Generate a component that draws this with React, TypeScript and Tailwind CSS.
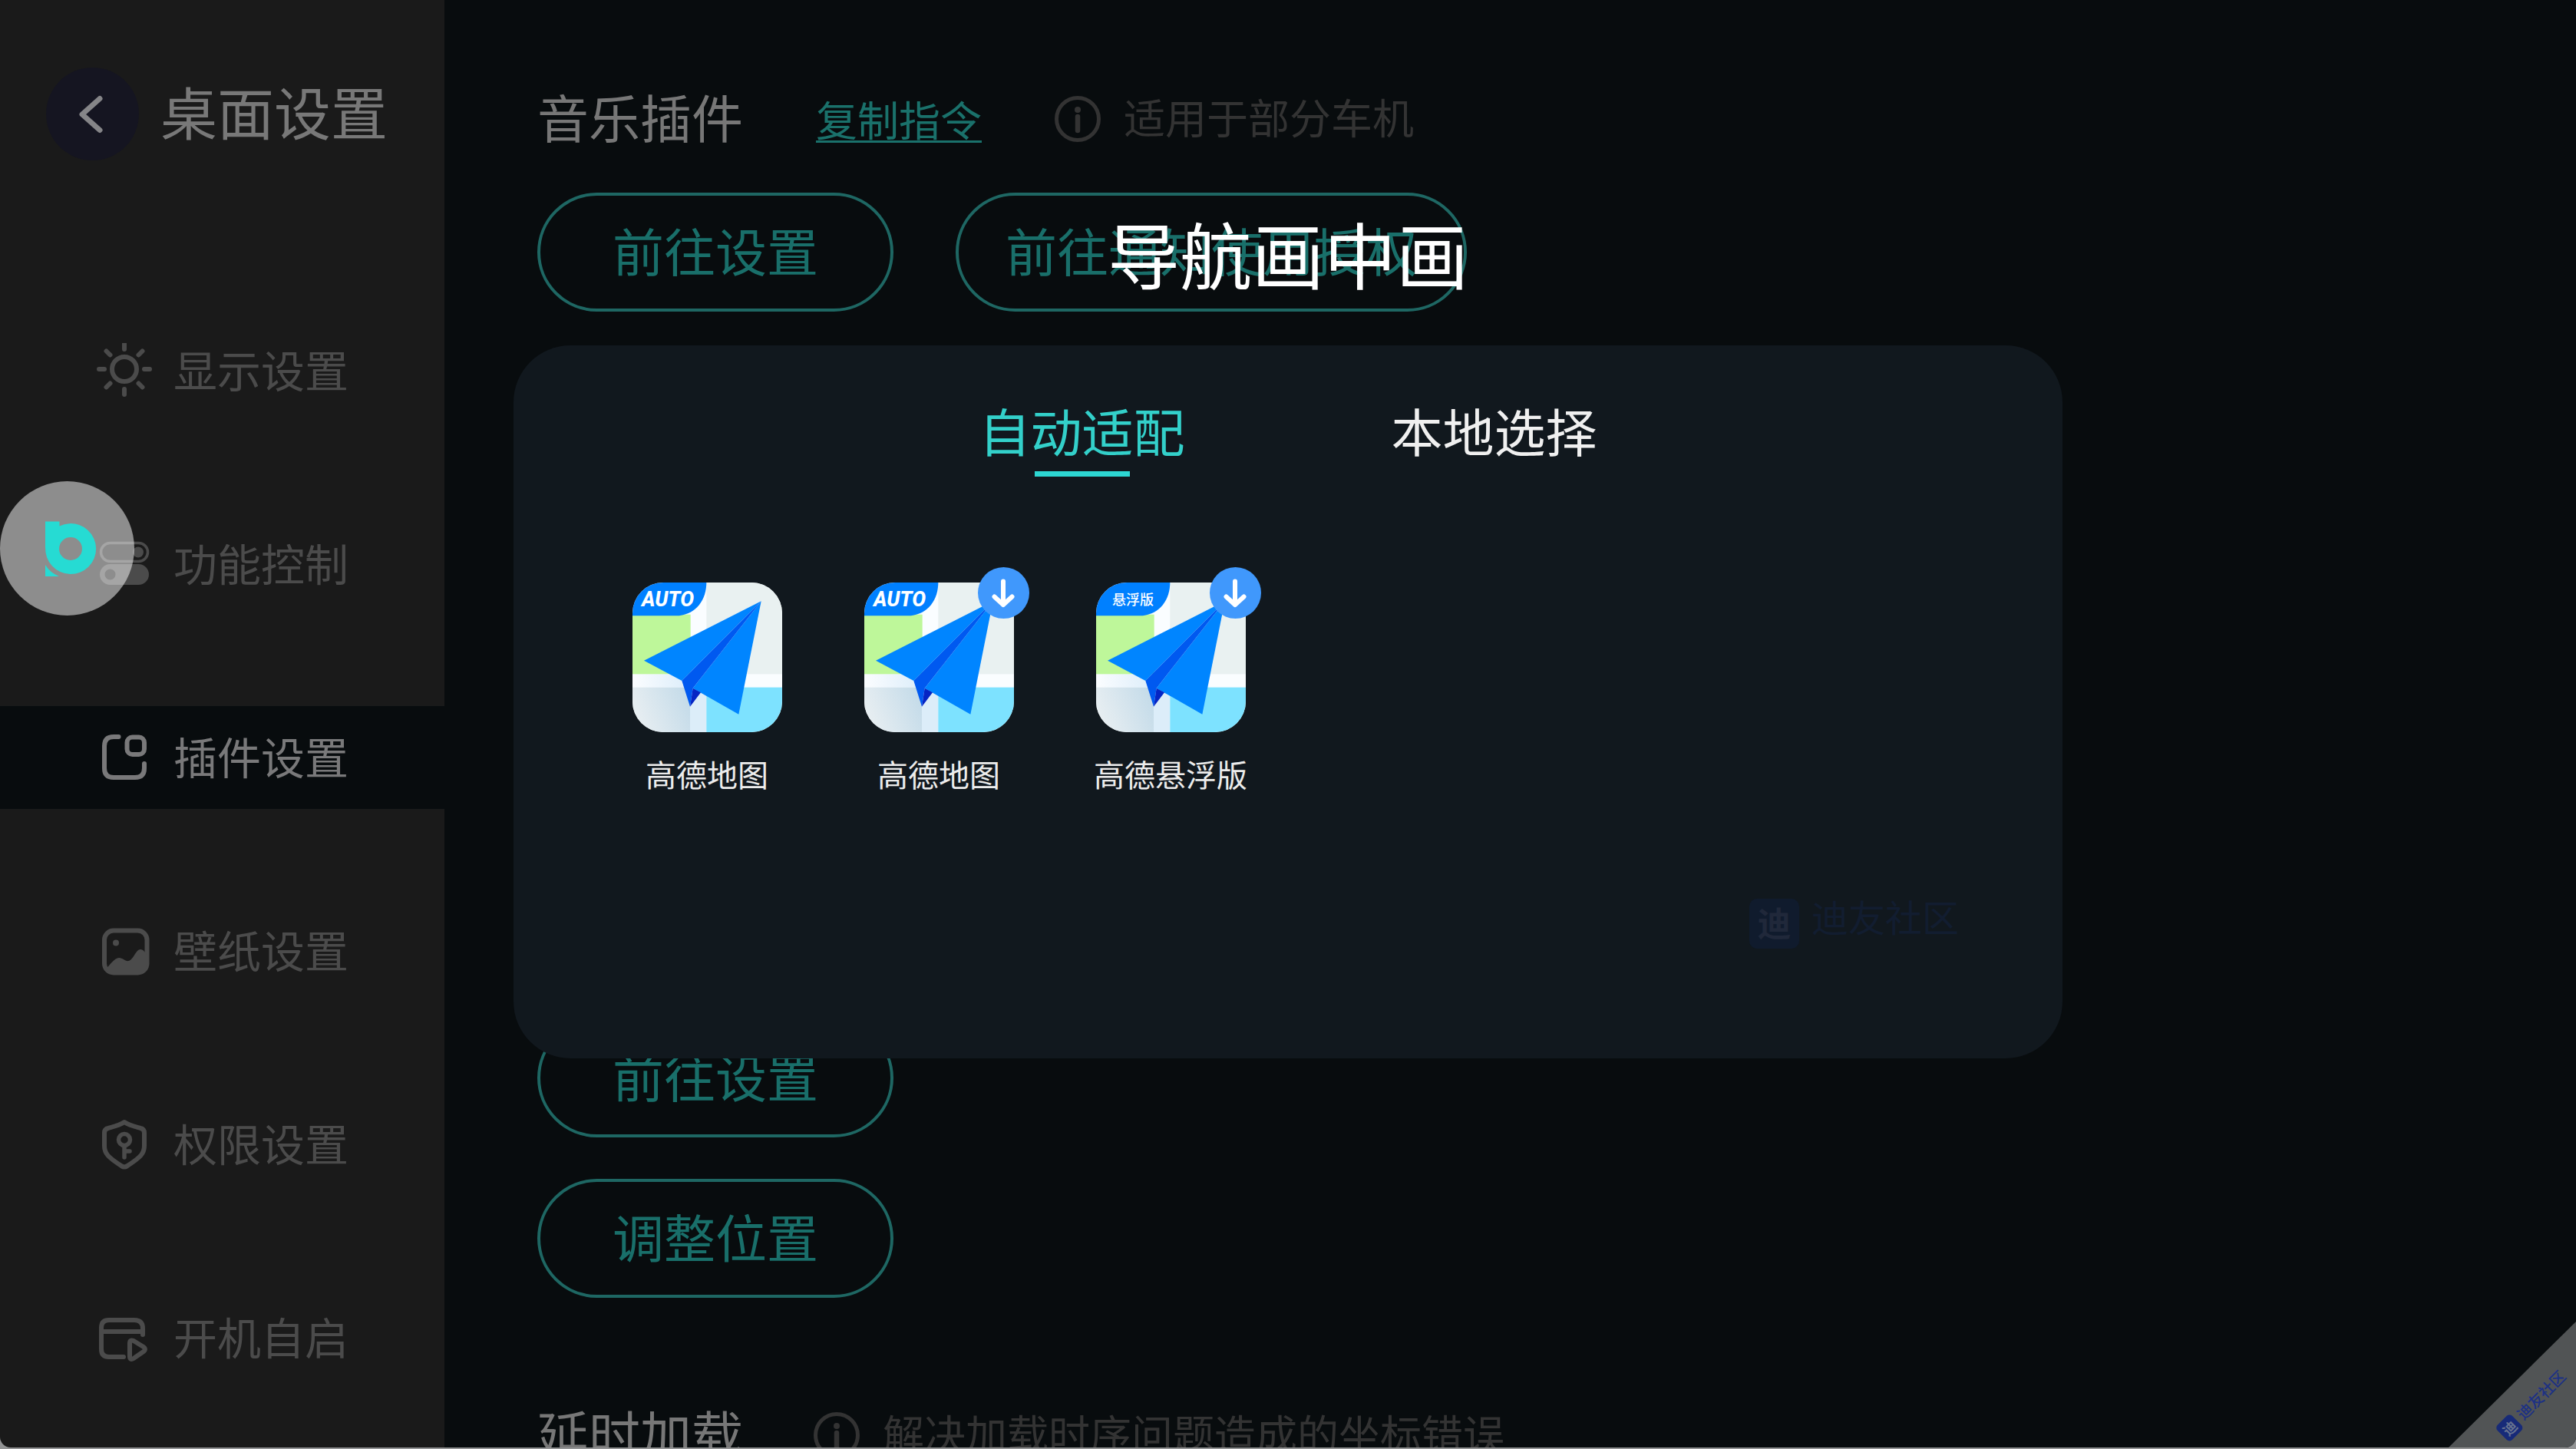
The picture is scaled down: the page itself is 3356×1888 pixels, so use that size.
import type { ReactNode } from "react";

const navItems = [
  { label: "显示设置", icon: <SunIcon /> },
  { label: "功能控制", icon: <ToggleIcon /> },
  { label: "插件设置", icon: <PluginIcon />, active: true },
  { label: "壁纸设置", icon: <WallpaperIcon /> },
  { label: "权限设置", icon: <ShieldKeyIcon /> },
  { label: "开机自启", icon: <BootIcon /> },
];

const apps = [
  { id: "auto", name: "高德地图", tag: "AUTO", download: false },
  { id: "auto-remote", name: "高德地图", tag: "AUTO", download: true },
  { id: "float", name: "高德悬浮版", tag: "悬浮版", download: true },
];

function NavSvg({ children }: { children: ReactNode }) {
  return (
    <svg
      viewBox="0 0 72 72"
      className="size-[72px] shrink-0"
      fill="none"
      stroke="currentColor"
      strokeWidth="6"
      strokeLinecap="round"
      strokeLinejoin="round"
      aria-hidden="true"
    >
      {children}
    </svg>
  );
}

function SunIcon() {
  return (
    <NavSvg>
      <circle cx="36" cy="34" r="16" />
      <path d="M36 1v7M36 60v7M3 34h7M62 34h7M12.500 10.500l5 5M54.500 52.500l5 5M12.500 57.500l5-5M54.500 15.500l5-5" />
    </NavSvg>
  );
}

function ToggleIcon() {
  return (
    <NavSvg>
      <rect x="5.500" y="8.500" width="61" height="24" rx="12" strokeWidth="3.500" />
      <circle cx="54" cy="20.500" r="7" fill="currentColor" stroke="none" />
      <path
        d="M17.500 36h37a13.500 13.500 0 0 1 0 27h-37a13.500 13.500 0 0 1 0-27ZM17.500 42.500a7 7 0 1 0 0 14a7 7 0 0 0 0-14Z"
        fill="currentColor"
        fillRule="evenodd"
        stroke="none"
      />
    </NavSvg>
  );
}

function PluginIcon() {
  return (
    <NavSvg>
      <path d="M28.500 9H22Q10 9 10 21V50Q10 62 22 62H50Q62 62 62 50V44" />
      <rect x="39.500" y="9.500" width="22.500" height="22.500" rx="7" />
    </NavSvg>
  );
}

function WallpaperIcon() {
  return (
    <NavSvg>
      <rect x="10" y="9.500" width="55.500" height="55" rx="12" />
      <circle cx="25" cy="25.500" r="4" fill="currentColor" stroke="none" />
      <path
        d="M11 60C18 54 23 45 29 45C34 45 37 50 42 49C48 47 51 34 57 34C61 34 63 38 65 41V54Q64 64 54 64H20Q13 64 11 60Z"
        fill="currentColor"
        stroke="none"
      />
    </NavSvg>
  );
}

function ShieldKeyIcon() {
  return (
    <NavSvg>
      <path d="M36 7C42 11 50 13 57 15Q62 16 62 21V38C62 48 57 53 40 64Q36 67 32 64C15 53 10 48 10 38V21Q10 16 15 15C22 13 30 11 36 7Z" />
      <circle cx="36" cy="30" r="7.500" strokeWidth="5.500" />
      <path d="M36 38v15M37 45h6" strokeWidth="5.500" />
    </NavSvg>
  );
}

function BootIcon() {
  return (
    <NavSvg>
      <path d="M60 32V24Q60 13 49 13H16Q6 13 6 23V51Q6 61 16 61H35M7 28H59" />
      <path d="M43 43Q43 38 48 40L61 48Q65 51 61 54L48 63Q43 66 43 60Z" />
    </NavSvg>
  );
}

function InfoIcon() {
  return (
    <svg viewBox="0 0 60 60" className="size-[60px] shrink-0" fill="none" stroke="currentColor" aria-hidden="true">
      <circle cx="30" cy="30" r="27.500" strokeWidth="5" />
      <circle cx="30" cy="18" r="4" fill="currentColor" stroke="none" />
      <path d="M30 27v18" strokeWidth="6.500" strokeLinecap="round" />
    </svg>
  );
}

function MapLogo({ id, tag }: { id: string; tag: string }) {
  return (
    <svg viewBox="0 0 585 585" className="size-[195px] rounded-[40px]" aria-hidden="true">
      <defs>
        <linearGradient id={`${id}-ground`} x1="0" y1="0.600" x2="1" y2="0.300">
          <stop offset="0" stopColor="#e9eff2" />
          <stop offset="1" stopColor="#c4dbe9" />
        </linearGradient>
        <linearGradient id={`${id}-road`} x1="0" y1="0" x2="1" y2="0">
          <stop offset="0" stopColor="#fbfdff" />
          <stop offset="0.350" stopColor="#deeefa" />
          <stop offset="0.500" stopColor="#fafdff" />
        </linearGradient>
      </defs>
      <rect width="585" height="585" fill="#fafdff" />
      <rect y="358" width="585" height="52" fill={`url(#${id}-road)`} />
      <rect x="225" y="410" width="64" height="175" fill="#dcedf9" />
      <rect y="125" width="227" height="233" fill="#bef79a" />
      <rect x="289" width="296" height="358" fill="#e9f1f1" />
      <rect y="410" width="225" height="175" fill={`url(#${id}-ground)`} />
      <rect x="289" y="410" width="296" height="175" fill="#7de2ff" />
      <path d="M503 73L45 305L193 384Z" fill="#0085ff" />
      <path d="M503 73L236 413L415 515Z" fill="#0085ff" />
      <path d="M503 73L193 384L225 485L236 413Z" fill="#0059f0" />
      <path d="M236 413L267 430L225 485Z" fill="#0525c4" />
      <path d="M0 0H289C289 75 240 130 170 130H0Z" fill="#0080ff" />
      {tag === "AUTO" ? (
        <text x="138" y="92" textAnchor="middle" className="fill-white font-[Roboto,sans-serif] text-[80px] font-extrabold italic">
          {tag}
        </text>
      ) : (
        <text x="144" y="87" textAnchor="middle" className="fill-white text-[54px] font-medium">
          {tag}
        </text>
      )}
    </svg>
  );
}

function OutlineButton({ children }: { children: ReactNode }) {
  return (
    <button
      type="button"
      className="h-[155px] min-w-[464px] rounded-full border-4 border-[#1e6763] px-[61px] pb-[8px] text-[67px] leading-none text-[#196f6a]"
    >
      {children}
    </button>
  );
}

function Hint({ children }: { children: ReactNode }) {
  return (
    <div className="flex items-center gap-[30px] text-[#333333]">
      <InfoIcon />
      <p className="pb-[6px] text-[54px] leading-none">{children}</p>
    </div>
  );
}

function Sidebar() {
  return (
    <aside className="flex w-[579px] shrink-0 flex-col bg-[#1a1a1a]">
      <div className="flex items-center gap-[28px] pt-[88px] pl-[60px]">
        <button type="button" aria-label="返回" className="flex size-[121px] items-center justify-center rounded-full bg-[#151521] text-[#858588]">
          <svg viewBox="0 0 32 50" className="mr-[6px] h-[50px] w-[32px]" fill="none" stroke="currentColor" strokeWidth="7" strokeLinecap="round" strokeLinejoin="round" aria-hidden="true">
            <path d="M28 4.500L5 25L28 45.500" />
          </svg>
        </button>
        <h1 className="pb-[10px] text-[74px] leading-none text-[#787878]">桌面设置</h1>
      </div>

      <nav className="mt-[207px] flex flex-col gap-[118px]">
        {navItems.map((item) => (
          <a
            key={item.label}
            href="#"
            aria-current={item.active ? "page" : undefined}
            className={
              item.active
                ? "flex h-[134px] items-center gap-[28px] bg-[#080c0e] pl-[126px] text-[57px] leading-none text-[#79797a]"
                : "flex h-[134px] items-center gap-[28px] pl-[126px] text-[57px] leading-none text-[#4b4b4b]"
            }
          >
            {item.icon}
            <span className="pb-[5px]">{item.label}</span>
          </a>
        ))}
      </nav>
    </aside>
  );
}

function PluginSettings() {
  return (
    <main className="flex-1 overflow-hidden bg-[#080c0e] pt-[113px] pl-[121px]">
      <section>
        <div className="flex h-[84px] items-center gap-[95px]">
          <h2 className="pb-[10px] text-[67px] leading-none text-[#777777]">音乐插件</h2>
          <a href="#" className="text-[54px] leading-none text-[#1a716b] underline decoration-[3px] underline-offset-[5px]">
            复制指令
          </a>
          <Hint>适用于部分车机</Hint>
        </div>
        <div className="mt-[54px] flex gap-[81px]">
          <OutlineButton>前往设置</OutlineButton>
          <OutlineButton>前往通知使用授权</OutlineButton>
        </div>
      </section>

      <section className="mt-[921px] flex flex-col items-start gap-[54px]">
        <OutlineButton>前往设置</OutlineButton>
        <OutlineButton>调整位置</OutlineButton>
      </section>

      <section className="mt-[137px] flex h-[84px] items-center gap-[92px]">
        <h2 className="pb-[10px] text-[67px] leading-none text-[#777777]">延时加载</h2>
        <Hint>解决加载时序问题造成的坐标错误</Hint>
      </section>
    </main>
  );
}

function PipDialog() {
  return (
    <div role="dialog" aria-label="导航画中画" className="absolute inset-0 flex flex-col items-center pt-[279px]">
      <h2 className="text-[94px] leading-[100px] text-white">导航画中画</h2>

      <div className="relative mt-[71px] min-h-[929px] w-full max-w-[2018px] rounded-[74px] bg-[#11181e] px-[101px] pt-[74px]">
        <div role="tablist" className="flex justify-center gap-[269px] text-[67px] leading-[72px]">
          <button type="button" role="tab" aria-selected="true" className="flex flex-col items-center gap-[18px] text-[#33d0ca]">
            自动适配
            <span className="h-[7px] w-[124px] bg-[#2dd6d2]" />
          </button>
          <button type="button" role="tab" aria-selected="false" className="self-start text-[#f0f0f0]">
            本地选择
          </button>
        </div>

        <div className="mt-[138px] flex">
          {apps.map((app) => (
            <button key={app.id} type="button" className="flex w-[302px] flex-col items-center gap-[32px]">
              <span className="relative">
                <MapLogo id={app.id} tag={app.tag} />
                {app.download && (
                  <span className="absolute -top-5 -right-5 flex size-[67px] items-center justify-center rounded-full bg-[#4098fc]">
                    <svg viewBox="0 0 30 38" className="h-[38px] w-[30px]" fill="none" stroke="white" strokeWidth="6" strokeLinecap="round" strokeLinejoin="round" aria-hidden="true">
                      <path d="M15 3.500V34M3.500 23.500L15 34L26.500 23.500" />
                    </svg>
                  </span>
                )}
              </span>
              <span className="text-[40px] leading-[44px] text-[#ececec]">{app.name}</span>
            </button>
          ))}
        </div>

        {/* Community mark */}
        <div className="absolute right-[135px] bottom-[142px] flex items-center gap-[16px]">
          <span className="flex size-[65px] items-center justify-center rounded-[10px] bg-[#101b2d] pb-1 text-[44px] leading-none font-bold text-[#20283a]">
            迪
          </span>
          <span className="pb-5 text-[48px] leading-none text-[#121d30]">迪友社区</span>
        </div>
      </div>
    </div>
  );
}

function FloatingBall() {
  return (
    <button type="button" aria-label="悬浮球" className="absolute top-[627px] left-0 size-[175px] rounded-full bg-white/50">
      <svg viewBox="0 0 175 175" className="size-full" aria-hidden="true">
        <path
          d="M59 52.500H77.500V58.500A33 33 0 1 1 61 99Q59 93 59 86ZM92 73A15 15 0 1 0 92 103A15 15 0 1 0 92 73Z"
          fill="#26dbd3"
          fillRule="evenodd"
        />
        <path d="M59 109Q65 119 77 124H59Z" fill="#26dbd3" />
      </svg>
    </button>
  );
}

function CornerRibbon() {
  return (
    <div className="absolute right-0 bottom-0 h-[164px] w-[166px] bg-[#515455] [clip-path:polygon(100%_0,100%_100%,0_100%)]">
      <div className="absolute top-[94px] left-[53px] flex h-[28px] w-[112px] -rotate-45 items-center gap-[6px] text-[#1d3184]">
        <span className="flex size-[27px] shrink-0 items-center justify-center rounded-[5px] bg-[#172a78] text-[18px] leading-none font-bold text-[#66718f]">
          迪
        </span>
        <span className="pb-[3px] text-[20px] leading-none font-medium whitespace-nowrap">迪友社区</span>
      </div>
    </div>
  );
}

export default function App() {
  return (
    <div className="h-screen bg-[#939495] pb-[2px] font-['Noto_Sans_CJK_SC',sans-serif]">
      <div className="relative flex h-full overflow-hidden rounded-b-[14px]">
        <Sidebar />
        <PluginSettings />
        <PipDialog />
        <FloatingBall />
        <CornerRibbon />
      </div>
    </div>
  );
}
